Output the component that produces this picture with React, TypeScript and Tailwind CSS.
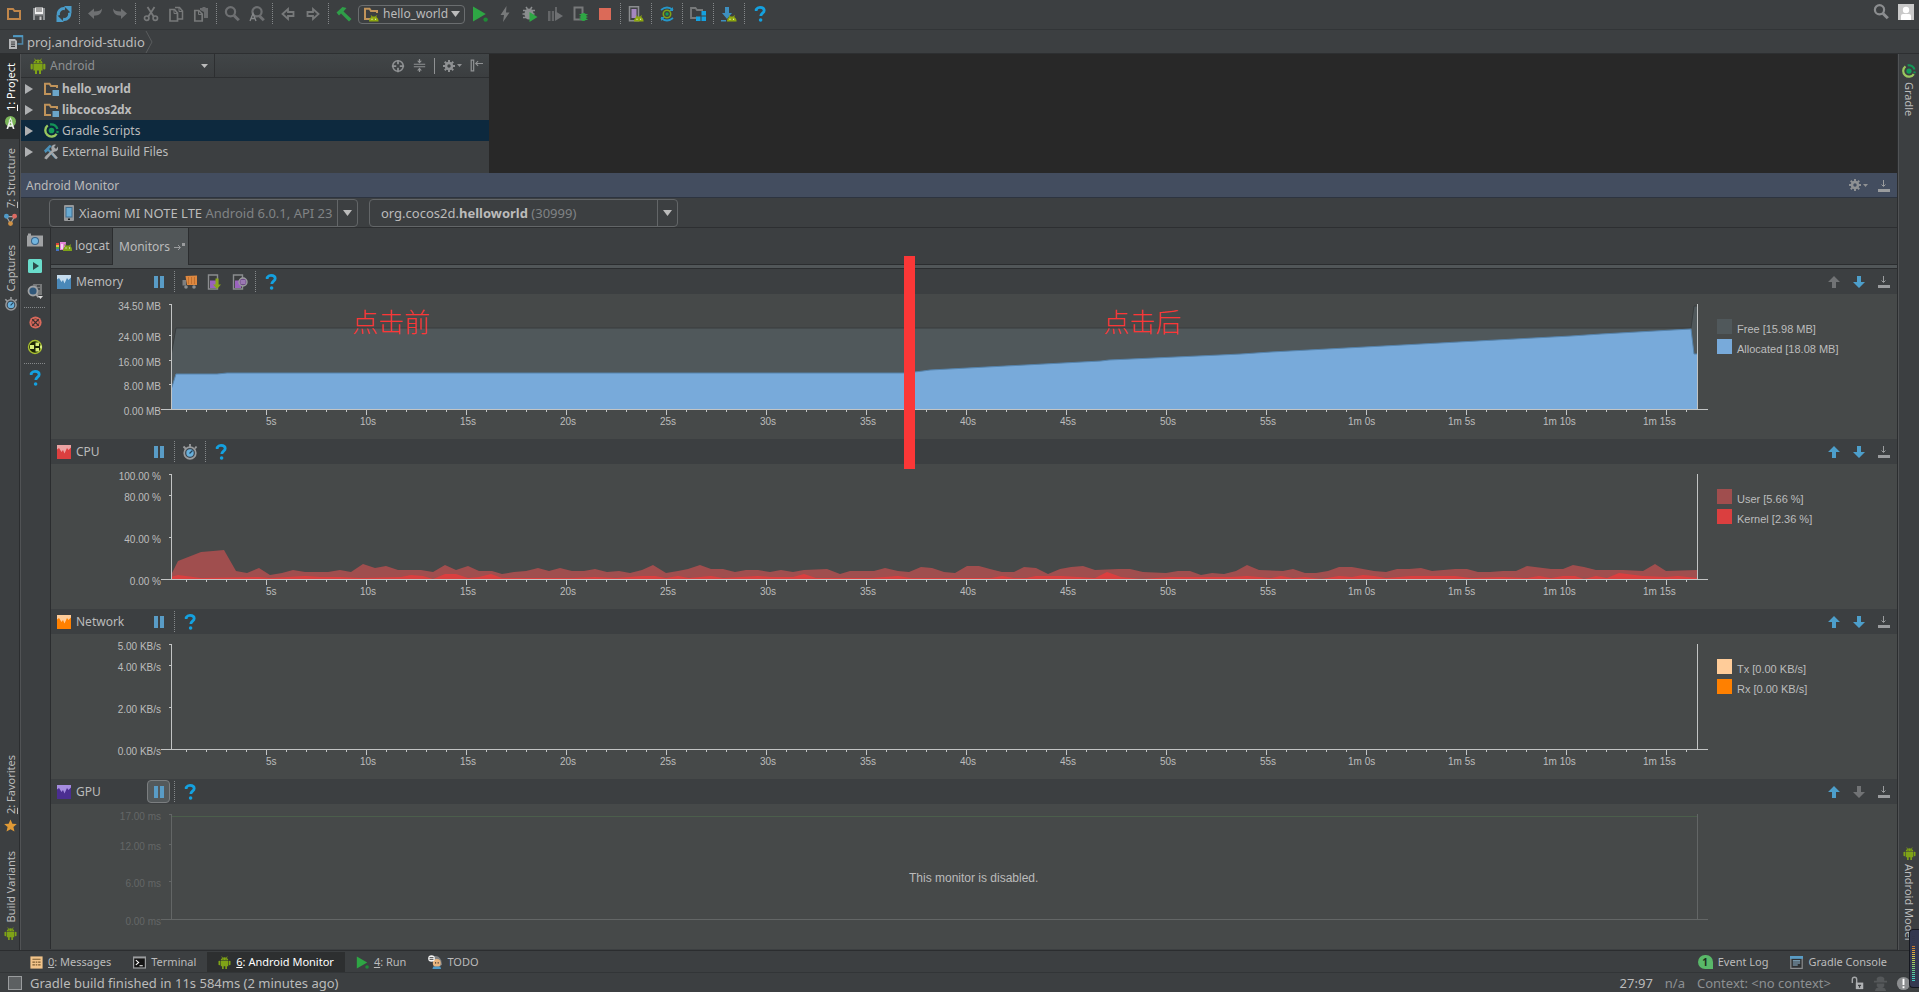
import type { ReactNode } from "react";

type Point = [number, number];

interface MonitorDef {
  name: string;
  light: string;
  dark: string;
  unit: string;
  ticks: { value: string; y: number }[];
  legend: { label: string; color: string }[];
  upEnabled: boolean;
  downEnabled: boolean;
  disabled?: boolean;
}

// Width of the plot's own coordinate system: 20 units are one second.
const PLOT_W = 1526;
const BASE_Y = 115;

const ALLOCATED: Point[] = [
  [0, 96], [5, 80], [46, 80], [56, 79], [735, 79], [752, 77], [759, 76], [930, 67], [938, 66],
  [1049, 61], [1070, 60], [1100, 58], [1250, 50], [1400, 42], [1430, 40], [1520, 35], [1523, 60], [1526, 60],
];
const HEAP: Point[] = [[0, 62], [5, 34], [1520, 34], [1523, 12], [1526, 12]];

const USER: Point[] = [
  [0, 111], [7, 97], [30, 88], [42, 87], [53, 86], [65, 107], [76, 109], [88, 104], [99, 111], [111, 109],
  [122, 106], [134, 108], [157, 108], [169, 106], [180, 108], [192, 100], [204, 104], [215, 102], [227, 106],
  [239, 106], [250, 106], [262, 108], [274, 101], [285, 106], [297, 102], [308, 107], [321, 107], [331, 110],
  [343, 108], [355, 107], [367, 104], [378, 107], [389, 104], [401, 107], [413, 107], [424, 105], [436, 108],
  [448, 107], [459, 109], [471, 106], [482, 101], [495, 109], [507, 107], [517, 105], [529, 101], [540, 105],
  [552, 105], [564, 108], [575, 106], [587, 106], [599, 108], [610, 106], [622, 108], [633, 106], [656, 105],
  [669, 110], [679, 107], [691, 107], [703, 107], [714, 104], [727, 107], [738, 108], [750, 103], [761, 104],
  [773, 108], [784, 109], [796, 102], [808, 102], [819, 105], [831, 108], [843, 108], [853, 103], [865, 104],
  [877, 110], [889, 105], [900, 103], [912, 102], [924, 106], [947, 105], [959, 105], [972, 108], [995, 109],
  [1007, 107], [1019, 107], [1030, 111], [1041, 109], [1053, 110], [1065, 107], [1076, 101], [1088, 106],
  [1112, 107], [1122, 105], [1134, 109], [1145, 109], [1157, 107], [1168, 103], [1181, 103], [1203, 107],
  [1215, 108], [1226, 105], [1238, 105], [1250, 104], [1261, 107], [1284, 105], [1296, 105], [1307, 108],
  [1319, 108], [1332, 107], [1345, 107], [1356, 102], [1380, 105], [1392, 105], [1402, 101], [1413, 103],
  [1425, 106], [1452, 106], [1472, 107], [1484, 100], [1495, 107], [1526, 106],
];
const KERNEL: Point[] = [
  [0, 113], [7, 111], [30, 114], [88, 113], [99, 114], [134, 112], [150, 113], [169, 113], [190, 114], [230, 113],
  [240, 111], [252, 112], [262, 115], [274, 110], [285, 110], [297, 114], [308, 113], [320, 110], [331, 114],
  [400, 114], [424, 113], [445, 114], [471, 112], [484, 112], [495, 114], [507, 112], [518, 114], [540, 112],
  [552, 114], [587, 112], [600, 113], [622, 113], [633, 110], [645, 114], [700, 114], [727, 112], [740, 114],
  [820, 114], [831, 112], [843, 114], [855, 114], [865, 112], [890, 112], [924, 114], [936, 108], [950, 113],
  [970, 115], [1000, 113], [1060, 113], [1076, 112], [1100, 114], [1110, 112], [1122, 114], [1134, 113],
  [1150, 115], [1168, 112], [1181, 113], [1192, 111], [1203, 112], [1215, 114], [1240, 112], [1284, 112],
  [1300, 114], [1332, 113], [1356, 114], [1368, 112], [1380, 114], [1392, 112], [1404, 112], [1413, 115],
  [1425, 112], [1436, 114], [1448, 109], [1472, 112], [1495, 113], [1507, 112], [1526, 114],
];

const MONITORS: MonitorDef[] = [
  {
    name: "Memory", light: "#c5dcee", dark: "#4a88b8", unit: "MB",
    ticks: [{ value: "34.50", y: 10 }, { value: "24.00", y: 41 }, { value: "16.00", y: 66 }, { value: "8.00", y: 90 }, { value: "0.00", y: 115 }],
    legend: [{ label: "Free [15.98 MB]", color: "#50585b" }, { label: "Allocated [18.08 MB]", color: "#78aada" }],
    upEnabled: false, downEnabled: true,
  },
  {
    name: "CPU", light: "#eba3a3", dark: "#db3f3f", unit: "%",
    ticks: [{ value: "100.00", y: 10 }, { value: "80.00", y: 31 }, { value: "40.00", y: 73 }, { value: "0.00", y: 115 }],
    legend: [{ label: "User [5.66 %]", color: "#a04e4e" }, { label: "Kernel [2.36 %]", color: "#db3f3f" }],
    upEnabled: true, downEnabled: true,
  },
  {
    name: "Network", light: "#ffcc99", dark: "#ff8000", unit: "KB/s",
    ticks: [{ value: "5.00", y: 10 }, { value: "4.00", y: 31 }, { value: "2.00", y: 73 }, { value: "0.00", y: 115 }],
    legend: [{ label: "Tx [0.00 KB/s]", color: "#ffcc99" }, { label: "Rx [0.00 KB/s]", color: "#ff8000" }],
    upEnabled: true, downEnabled: true,
  },
  {
    name: "GPU", light: "#a58ce0", dark: "#4b2e91", unit: "ms",
    ticks: [{ value: "17.00", y: 10 }, { value: "12.00", y: 40 }, { value: "6.00", y: 77 }, { value: "0.00", y: 115 }],
    legend: [],
    upEnabled: true, downEnabled: false, disabled: true,
  },
];

const toPath = (pts: Point[]) => pts.map(([x, y], i) => `${i ? "L" : "M"}${x} ${y}`).join(" ");
const toArea = (pts: Point[]) => `${toPath(pts)} L${PLOT_W} ${BASE_Y} L0 ${BASE_Y} Z`;
const pct = (x: number) => `${(x / PLOT_W) * 100}%`;

function Svg({ size = 16, children }: { size?: number; children: ReactNode }) {
  return (
    <svg width={size} height={size} viewBox="0 0 16 16" className="shrink-0" aria-hidden="true">
      {children}
    </svg>
  );
}

/* ---------- icons ---------- */

const droid = (
  <g fill="#7fa317">
    <path d="M4.2 .8 5.2 2.4C4.2 3 3.500 4 3.400 5.200h9.200c-.1-1.200-.8-2.200-1.800-2.800l1-1.600-.6-.4-1.100 1.600a5.500 5.500 0 0 0-4.200 0L4.800.4z" />
    <path d="M3.400 5.800h9.200v6.700H11V16H9V12.500H7V16H5V12.500H3.400z" />
    <rect x=".6" y="5.800" width="2.200" height="5.700" rx="1" />
    <rect x="13.200" y="5.800" width="2.200" height="5.700" rx="1" />
    <path d="M5.700 3.300h1.100v1.100H5.700zM9.300 3.300h1.100v1.100H9.300z" fill="#2f3a12" />
  </g>
);

const droidHead = (
  <g>
    <path d="M6 15.500C6 13 7.300 11.500 8.500 11L7.600 9.700l.7-.5 1.200 1.400h2.600l1.200-1.400.7.5-.9 1.300c1.200.5 2.500 2 2.500 4.500z" fill="#8ea80f" />
    <path d="M8.500 12.800h1v1h-1zM12.100 12.800h1v1h-1z" fill="#fff" />
  </g>
);

const AndroidIcon = ({ size = 16 }: { size?: number }) => <Svg size={size}>{droid}</Svg>;

const HelpIcon = () => (
  <Svg>
    <path d="M4.200 5V3.500Q5.500 1.400 8 1.400c2.700 0 4.200 1.200 4.200 3.100 0 2.600-3.400 2.800-3.400 5.600" fill="none" stroke="#14a1e0" strokeWidth="2.800" />
    <circle cx="8.600" cy="14" r="1.800" fill="#14a1e0" />
  </Svg>
);

const GradleIcon = ({ size = 15 }: { size?: number }) => (
  <Svg size={size}>
    <path d="M4 2.600A6.600 6.600 0 1 0 13.500 11.500" fill="none" stroke="#9ac85f" strokeWidth="2.500" />
    <path d="M6.500 1.600a6.600 6.600 0 0 1 7.800 4.800M14.600 8.500l-.5 2" fill="none" stroke="#149457" strokeWidth="2.500" />
    <circle cx="8" cy="8" r="3" fill="#149e5a" />
  </Svg>
);

const OpenIcon = () => (
  <Svg>
    <path d="M2 3h5l1.500 2H14v8H2z" fill="none" stroke="#c0864a" strokeWidth="2" />
  </Svg>
);

const SaveIcon = () => (
  <Svg>
    <path d="M2 2h12v12H2z" fill="#8f9294" />
    <path d="M4 1.500h8V8H4z" fill="#f2f2f2" />
    <path d="M5 3h6M5 5h6" stroke="#555" strokeWidth="1" />
    <path d="M4 9.500h8V14H4z" fill="#4c4f51" />
    <path d="M8.500 10.500h2V14h-2z" fill="#c5c5c5" />
  </Svg>
);

const SyncIcon = () => (
  <Svg>
    <path d="M2.500 9.500A5.500 5.500 0 0 1 9 2.700M13.500 6.500A5.500 5.500 0 0 1 7 13.300" fill="none" stroke="#4a9cc9" strokeWidth="3" />
    <path d="M8 0h7.500v7.500zM8 16H.5V8.500z" fill="#4a9cc9" />
  </Svg>
);

const UndoIcon = ({ flip = false }: { flip?: boolean }) => (
  <Svg>
    <path
      d="M1 7.500 7 2.500V5.500c4.500 0 7-1 8-3-.2 5-3 7.200-8 7.200V13z"
      fill="#6e7072"
      transform={flip ? "matrix(-1 0 0 1 16 0)" : undefined}
    />
  </Svg>
);

const CutIcon = () => (
  <Svg>
    <path d="M4.500 1 11 11M11.500 1 5 11" stroke="#77797a" strokeWidth="1.800" />
    <circle cx="3.700" cy="12.200" r="2.200" fill="none" stroke="#77797a" strokeWidth="1.700" />
    <circle cx="12.300" cy="12.200" r="2.200" fill="none" stroke="#77797a" strokeWidth="1.700" />
  </Svg>
);

const CopyIcon = () => (
  <Svg>
    <path d="M7 1.500h4.500L14.500 5v8H10" fill="none" stroke="#77797a" strokeWidth="1.500" />
    <path d="M2 3.500h4.500L9.500 7v8H2z" fill="none" stroke="#77797a" strokeWidth="1.700" />
    <path d="M6 4v3.500h3.500M11 2v3.500h3" fill="none" stroke="#77797a" />
  </Svg>
);

const PasteIcon = () => (
  <Svg>
    <path d="M7 2h2l1-1h2l1 1h2v10h-4V6L7 4z" fill="#6a6c6e" />
    <path d="M1.800 4.500h4L9.200 8v7H1.800z" fill="none" stroke="#77797a" strokeWidth="1.700" />
    <path d="M5.500 5v3.500H9" fill="none" stroke="#77797a" />
  </Svg>
);

const SearchIcon = ({ letter = false, color = "#6e7072" }: { letter?: boolean; color?: string }) => (
  <Svg>
    <circle cx={letter ? 8 : 6.500} cy="5.800" r="4.600" fill="none" stroke={color} strokeWidth="2.200" />
    <path d="m10 9.500 4.800 4.800" stroke={color} strokeWidth="3" />
    {letter && <path d="M1 15 4 7.500 7 15M2 12.500h4" fill="none" stroke="#858789" strokeWidth="1.300" />}
  </Svg>
);

const ArrowIcon = ({ flip = false }: { flip?: boolean }) => (
  <Svg>
    <path
      d="M2.500 8 8 3v3h5.500v4H8v3z"
      fill="none"
      stroke="#77797a"
      strokeWidth="1.800"
      transform={flip ? "matrix(-1 0 0 1 16 0)" : undefined}
    />
  </Svg>
);

const HammerIcon = () => (
  <Svg>
    <path d="M.5 6.500 6.500 1 10.500 2 7.500 5.500 15.500 13 13 15.500 5 7.500 3 9.500z" fill="#2f9e48" />
  </Svg>
);

const RunIcon = ({ size = 16 }: { size?: number }) => (
  <Svg size={size}>
    <path d="M1 .5 13.800 8 1 15.500z" fill="#2ea644" />
    <circle cx="13.600" cy="13.600" r="2.200" fill="#1f8a36" />
  </Svg>
);

const BoltIcon = () => (
  <Svg>
    <path d="M9.500 0 3.500 9h3.500L6 16l6.500-9.500H9z" fill="#77797a" />
  </Svg>
);

const BugIcon = () => (
  <Svg>
    <ellipse cx="7" cy="8" rx="4.500" ry="5.500" fill="#8b8d8f" />
    <path d="M1 4.500h12M.5 8h12M1 11.500h9M4 1l1.500 2M10 1 8.500 3" stroke="#8b8d8f" strokeWidth="1.500" />
    <path d="M7.500 6 15.500 11l-8 5z" fill="#2ea644" />
  </Svg>
);

const ProfileIcon = () => (
  <Svg>
    <path d="M1 5h2.500v10H1zM4.800 5H7v10H4.800zM8 1h2v5H8z" fill="#646668" />
    <path d="m8 5 8 5-8 5z" fill="#6e7072" />
  </Svg>
);

const AttachIcon = () => (
  <Svg>
    <path d="M2.500 1.500h8v12h-8z" fill="none" stroke="#77797a" strokeWidth="2" />
    <ellipse cx="11.500" cy="11" rx="3" ry="4" fill="#2ea644" />
    <path d="M7.500 8.500h8M7.500 11h8M7.500 13.500h8" stroke="#2ea644" />
  </Svg>
);

const StopIcon = () => (
  <Svg>
    <path d="M2 2h12v12H2z" fill="#db6a58" />
  </Svg>
);

const AvdIcon = () => (
  <Svg>
    <path d="M1.500.8h9v14h-9z" fill="#404244" stroke="#8b8d8f" strokeWidth="1.500" />
    <path d="M3.500 3h5v9h-5z" fill="#a587c0" />
    {droidHead}
  </Svg>
);

const SyncGradleIcon = () => (
  <Svg>
    <path d="M2 4Q8-1 14 4M2 12q6 5 12 0" fill="none" stroke="#2596c8" strokeWidth="1.700" />
    <path d="M14 1v4h-4zM2 15v-4h4z" fill="#2596c8" />
    <circle cx="8" cy="8" r="3.700" fill="none" stroke="#7fa317" strokeWidth="1.600" />
    <circle cx="8" cy="8" r="1.700" fill="#149e5a" />
  </Svg>
);

const StructureIcon = () => (
  <Svg>
    <path d="M13 4H7L5.500 2H1v10h5" fill="none" stroke="#77797a" strokeWidth="1.800" />
    <path d="M11.500 5H16v4.500h-4.500zM6 10.500h4.500V15H6zM11.500 10.500H16V15h-4.500z" fill="#14a1e0" />
  </Svg>
);

const SdkIcon = () => (
  <Svg>
    <path d="M4 1h4v6h3l-5 6-5-6h3zM0 14h5v1.500H0z" fill="#3e8fbf" />
    {droidHead}
  </Svg>
);

const FolderIcon = ({ badge = "square" }: { badge?: "square" | "droid" }) => (
  <Svg>
    <path d="M14 7V5H8L6.500 2.800H2V13h6" fill="none" stroke="#c0935a" strokeWidth="2" />
    {badge === "square" ? <path d="M9.500 9H16v6H9.500z" fill="#6ba5c9" /> : droidHead}
  </Svg>
);

const ToolsIcon = () => (
  <Svg>
    <path d="M1 6.500 6.500 1 9 2 6 5l8 8.500-1.800 1.500L5 7 2.500 9z" fill="#4a90b8" />
    <path d="M3 13.500 12 5" stroke="#a5a7a9" strokeWidth="2.600" />
    <path d="M15 2.500 13 5l-2-2 2-2.300a3.500 3.500 0 1 0 2 4.800zM1 14l4.500-3.500 1 1.500L3.500 15.500z" fill="#a5a7a9" />
    <path d="m9.500 9.500 4.500 5" stroke="#a5a7a9" strokeWidth="2.400" />
  </Svg>
);

const ModuleIcon = () => (
  <Svg>
    <path d="M5.500 2h9v8h-5" fill="none" stroke="#4f87a8" strokeWidth="1.600" />
    <path d="M5 1.200h10v2H5z" fill="#4f9ac4" />
    <path d="M1 5h6l2 2v8H1z" fill="#b5b7b9" />
    <path d="M3 8h4M3 10.200h4M3 12.400h4" stroke="#3c3f41" strokeWidth="1.200" />
  </Svg>
);

const TargetIcon = () => (
  <Svg size={14}>
    <circle cx="8" cy="8" r="6" fill="none" stroke="#8f9193" strokeWidth="1.800" />
    <path d="M8 1v5M8 10v5M1 8h5M10 8h5" stroke="#8f9193" strokeWidth="2" />
  </Svg>
);

const CollapseIcon = () => (
  <Svg size={13}>
    <path d="M1 6.500h14M1 9.500h14" stroke="#8f9193" strokeWidth="1.300" />
    <path d="M8 0v3M8 13v3" stroke="#8f9193" strokeWidth="1.500" />
    <path d="M5 2h6L8 5.500zM5 14h6l-3-3.500z" fill="#8f9193" />
  </Svg>
);

const GearIcon = () => (
  <span className="flex items-center gap-0.5">
    <Svg size={12}>
      <circle cx="8" cy="8" r="4" fill="none" stroke="#8f9193" strokeWidth="3.400" />
      <path d="M8 0v3M8 13v3M0 8h3M13 8h3M2.300 2.300l2.200 2.200M11.500 11.500l2.200 2.200M13.700 2.300l-2.200 2.200M4.500 11.500l-2.200 2.200" stroke="#8f9193" strokeWidth="2.600" />
    </Svg>
    <svg width="5" height="3" viewBox="0 0 5 3" aria-hidden="true"><path d="M0 0h5L2.500 3z" fill="#8f9193" /></svg>
  </span>
);

const HideLeftIcon = () => (
  <Svg size={13}>
    <path d="M1.500 1.500h3v13h-3z" fill="none" stroke="#8f9193" strokeWidth="1.500" />
    <path d="M6.500 5.500H16M10 2.500l-3 3 3 3" fill="none" stroke="#8f9193" strokeWidth="1.300" />
  </Svg>
);

const MinimizeIcon = () => (
  <svg width="12" height="13" viewBox="0 0 12 13" aria-hidden="true">
    <path d="M0 10h12v3H0z" fill="#9a9c9e" />
    <path d="M5.500 1v6M3.500 5.500l2 2 2-2" fill="none" stroke="#9a9c9e" />
  </svg>
);

const MoveIcon = ({ down = false, on = true }: { down?: boolean; on?: boolean }) => (
  <svg width="12" height="12" viewBox="0 0 12 12" aria-hidden="true">
    <path
      d="M6 0 12 6H8v6H4V6H0z"
      fill={on ? "#4d9fcb" : "#717375"}
      transform={down ? "matrix(1 0 0 -1 0 12)" : undefined}
    />
  </svg>
);

const PauseIcon = () => (
  <svg width="10" height="12" viewBox="0 0 10 12" aria-hidden="true">
    <path d="M0 0h4v12H0zM6 0h4v12H6z" fill="#599cc6" />
  </svg>
);

const GcIcon = () => (
  <Svg>
    <path d="M3.500 2 15 1.500V11H5z" fill="#de8840" />
    <path d="M6.500 3v7M9.500 3v7M12.500 3v7" stroke="#b86a2b" strokeWidth=".8" />
    <path d="M.5 6H4v5.500H.5z" fill="#7e7f80" />
    <circle cx="4" cy="13" r="1.800" fill="#8b8d8f" />
    <circle cx="12" cy="13" r="1.800" fill="#8b8d8f" />
  </Svg>
);

const HeapIcon = ({ alloc = false }: { alloc?: boolean }) => (
  <Svg>
    <path d="M1.500 1h9v14h-9z" fill="#3b3d3f" stroke="#8b8d8f" strokeWidth="1.400" />
    <path d="M3 6.500h6V14H3z" fill="#9a63bd" />
    {alloc ? (
      <>
        <circle cx="11" cy="8" r="4" fill="#6d4a85" stroke="#9a9c9e" strokeWidth="1.400" />
        <path d="M8.500 7h5M8.500 9h5" stroke="#c9a6e0" />
      </>
    ) : (
      <path d="M8.500 4.500h3v6h2.500l-4 4.500-4-4.500h2.500z" fill="#8ba61c" />
    )}
  </Svg>
);

const StopwatchIcon = ({ size = 16 }: { size?: number }) => (
  <Svg size={size}>
    <path d="M8 0v3M1.500 2.500 4 5M14.500 2.500 13 4.500" stroke="#999b9d" strokeWidth="1.800" />
    <circle cx="8" cy="9" r="5.800" fill="#3b4650" stroke="#999b9d" strokeWidth="1.700" />
    <circle cx="8" cy="9" r="3.700" fill="#69b0dc" />
    <path d="m7.500 9.500 3-3" stroke="#23445c" strokeWidth="1.300" />
  </Svg>
);

const MonitorBadge = ({ light, dark }: { light: string; dark: string }) => (
  <svg width="14" height="14" viewBox="0 0 14 14" aria-hidden="true">
    <path d="M0 0h14v14H0z" fill={light} />
    <path d="M0 4.500 2 3l2.500 4L6 5l1.500 3.500L10 3l1.500 2L14 2.500V14H0z" fill={dark} />
  </svg>
);

const CameraIcon = () => (
  <Svg>
    <path d="M0 3.500h4V1.500H1v2M0 3.500h16v11H0z" fill="#a0a2a4" />
    <circle cx="8" cy="9" r="4" fill="#37648a" />
    <circle cx="8" cy="9" r="3" fill="#72b5df" />
  </Svg>
);

const RecordIcon = () => (
  <Svg>
    <rect x="1" y="1" width="14" height="14" rx="1.500" fill="#6adccb" />
    <path d="m6 4 6 4-6 4z" fill="#2c4a4a" />
  </Svg>
);

const DumpIcon = () => (
  <Svg>
    <path d="M6 1h9v11H9z" fill="#77797a" />
    <path d="M10 3h3M10 6h3" stroke="#3c3f41" strokeWidth="1.500" />
    <circle cx="6" cy="8" r="4.500" fill="#31587a" stroke="#a0a2a4" strokeWidth="1.800" />
    <path d="m9 11 2.500 3.500" stroke="#a0a2a4" strokeWidth="2" />
    <path d="M11 13h5l-2.500 3z" fill="#ddd" />
  </Svg>
);

const TerminateIcon = () => (
  <Svg size={13}>
    <circle cx="8" cy="8" r="7.500" fill="#db6a5c" />
    <path d="m4 4 8 8M12 4l-8 8" stroke="#3a2f2f" strokeWidth="1.500" />
    <circle cx="8" cy="8" r="4.600" fill="none" stroke="#3a2f2f" strokeWidth=".8" />
  </Svg>
);

const LayoutIcon = () => (
  <Svg>
    <circle cx="8" cy="8" r="6.500" fill="#1c2407" stroke="#a8c030" strokeWidth="1.400" />
    <path d="M3 6h4v4H3zM8.500 3.500H12V7H8.500zM8.500 9H12v3.500H8.500zM13 6.500h2v3h-2z" fill="#d6ec7a" />
  </Svg>
);

const PhoneIcon = () => (
  <svg width="10" height="16" viewBox="0 0 10 16" aria-hidden="true">
    <rect width="10" height="16" rx="1" fill="#97999b" />
    <path d="M1.500 2h7v10.500h-7z" fill="#3f6f92" />
    <path d="M2.500 3h5v8.500h-5z" fill="#68aad2" />
    <path d="M4 13.500h2V15H4z" fill="#1c1c1c" />
  </svg>
);

const LogcatIcon = () => (
  <svg width="16" height="9" viewBox="0 0 16 9" className="shrink-0" aria-hidden="true">
    <path d="M0 1h3v2H0z" fill="#d9433b" />
    <path d="M0 3h3v2H0z" fill="#e2c33c" />
    <path d="M0 5h3v2H0z" fill="#4ba84b" />
    <path d="M0 7h3v2H0z" fill="#4672c4" />
    <path d="M4 0h6l-1 8H4z" fill="#e583d8" />
    <path d="M5 2h2v5H5z" fill="#f6d4f2" />
    <path d="M7 9c0-3 1-4 2-4.500L8 2l2 1.500h3L15 2l-.5 2.500C15.500 5 16 6 16 9z" fill="#7fa317" />
    <path d="M9.500 5.500h1v1h-1zM13 5.500h1v1h-1z" fill="#fff" />
  </svg>
);

const StudioIcon = () => (
  <Svg size={13}>
    <circle cx="8" cy="6.700" r="6.700" fill="#7cb65a" />
    <path d="M8 2v2" stroke="#e9efe5" strokeWidth="1.500" />
    <path d="M4 16 7.500 6M12 16 8.500 6M5.500 11.500q2.500 1.500 5 0" fill="none" stroke="#f0f0f0" strokeWidth="2" />
    <circle cx="8" cy="6" r="2.200" fill="#e9efe5" />
    <circle cx="8" cy="6" r=".9" fill="#4b7a35" />
  </Svg>
);

const NodesIcon = () => (
  <Svg size={13}>
    <path d="M3 4.500h10L8 13z" fill="none" stroke="#a0a2a4" strokeWidth="1.400" />
    <circle cx="3" cy="4" r="3" fill="#4f9ac8" />
    <circle cx="13" cy="4" r="3" fill="#db6a62" />
    <circle cx="8" cy="13" r="3" fill="#cf9145" />
  </Svg>
);

const StarIcon = () => (
  <Svg size={13}>
    <path d="m8 .5 2.300 5.200 5.500.5-4.200 3.700 1.300 5.600L8 12.500l-4.900 3 1.300-5.600L.2 6.200l5.500-.5z" fill="#e09a36" />
  </Svg>
);

const MessagesIcon = () => (
  <Svg size={13}>
    <path d="M.5.500h15v15H.5z" fill="#f2c48a" />
    <path d="M3 4h10M3 7.500h3M7 7.500h2M10 7.500h3M3 11h3M7 11h2M10 11h3" stroke="#7a5a30" strokeWidth="1.400" />
  </Svg>
);

const TerminalIcon = () => (
  <Svg size={13}>
    <path d="M0 .5h16v15H0z" fill="#9a9c9e" />
    <path d="M1.500 3h13v11h-13z" fill="#141414" />
    <path d="m3.500 5 3.500 3-3.500 3M8 12h4" fill="none" stroke="#fff" strokeWidth="1.300" />
  </Svg>
);

const TodoIcon = () => (
  <Svg size={14}>
    <path d="M4 2q8-3 11 4l1 5-3 2-6-2z" fill="#7f8183" />
    <circle cx="10" cy="9" r="4.500" fill="#e9b57e" />
    <path d="M6 13h8l1 3H5z" fill="#4f9ac8" />
    <circle cx="4" cy="4" r="3.800" fill="#f4f4f4" />
    <path d="M1.800 3h4.400M1.800 5h4.400" stroke="#333" />
    <path d="M8 9h1.300M11 9h1.300" stroke="#333" strokeWidth="1.300" />
  </Svg>
);

const ConsoleIcon = () => (
  <Svg size={13}>
    <path d="M1 1h14v14.300H1z" fill="#2f3133" stroke="#8b8d8f" strokeWidth="1.500" />
    <path d="M0 0h16v3.500H0z" fill="#5a9cc4" />
    <path d="M3.500 6h9M3.500 8.500h9M3.500 11h6" stroke="#8fb6cf" strokeWidth="1.300" />
  </Svg>
);

const LockIcon = () => (
  <Svg size={14}>
    <path d="M1.500 8V4Q1.500 1.500 4 1.500T6.500 4v4" fill="none" stroke="#a5a7a9" strokeWidth="1.600" />
    <path d="M5.500 7.500H14V15H5.500z" fill="#b0b2b4" />
    <path d="M8 10h3.500v1.500h-1v2H9v-2H8z" fill="#3c3f41" />
  </Svg>
);

const InspectorIcon = () => (
  <Svg size={15}>
    <path d="M4 2q4-3 8 0v3h3v2H1V5h3zM4 8h8v3q-4 4-8 0zM2 16q1-4 3-3.500h6q2-.5 3 3.500z" fill="#55585a" />
  </Svg>
);

/* ---------- shared bits ---------- */

function IconButton({ label, children }: { label: string; children: ReactNode }) {
  return (
    <button type="button" aria-label={label} className="flex h-6 w-[25px] shrink-0 items-center justify-center">
      {children}
    </button>
  );
}

function Sep() {
  return (
    <span className="flex w-1.5 shrink-0 justify-center">
      <span className="h-[22px] w-px bg-[repeating-linear-gradient(to_bottom,#85888a_0,#85888a_1px,transparent_1px,transparent_2px)]" />
    </span>
  );
}

function RowSep() {
  return (
    <span className="mb-0.5 mt-1 h-px w-[22px] bg-[repeating-linear-gradient(to_right,#85888a_0,#85888a_1px,transparent_1px,transparent_2px)]" />
  );
}

const Caret = () => (
  <svg width="9" height="6" viewBox="0 0 9 6" className="shrink-0" aria-hidden="true">
    <path d="M0 0h9L4.500 6z" fill="#bbbbbb" />
  </svg>
);

const HEADER_BG = "bg-linear-to-b from-[#414547] to-[#3b3e40]";

/* ---------- top ---------- */

function MainToolbar() {
  return (
    <header className="flex h-[30px] items-center border-b border-[#323537] pb-px pl-px">
      <IconButton label="Open"><OpenIcon /></IconButton>
      <IconButton label="Save All"><SaveIcon /></IconButton>
      <IconButton label="Synchronize"><SyncIcon /></IconButton>
      <Sep />
      <IconButton label="Undo"><UndoIcon /></IconButton>
      <IconButton label="Redo"><UndoIcon flip /></IconButton>
      <Sep />
      <IconButton label="Cut"><CutIcon /></IconButton>
      <IconButton label="Copy"><CopyIcon /></IconButton>
      <IconButton label="Paste"><PasteIcon /></IconButton>
      <Sep />
      <IconButton label="Find"><SearchIcon /></IconButton>
      <IconButton label="Replace"><SearchIcon letter /></IconButton>
      <Sep />
      <IconButton label="Back"><ArrowIcon /></IconButton>
      <IconButton label="Forward"><ArrowIcon flip /></IconButton>
      <Sep />
      <IconButton label="Make Project"><HammerIcon /></IconButton>
      <label className="mx-0.5 flex h-[19px] shrink-0 items-center rounded-sm border border-[#6b6e70] pl-1 pr-1">
        <FolderIcon badge="droid" />
        <select aria-label="Run configuration" className="w-[72px] appearance-none bg-transparent pl-1 text-xs leading-4 outline-none">
          <option>hello_world</option>
        </select>
        <Caret />
      </label>
      <IconButton label="Run"><RunIcon /></IconButton>
      <IconButton label="Apply Changes"><BoltIcon /></IconButton>
      <IconButton label="Debug"><BugIcon /></IconButton>
      <IconButton label="Profile"><ProfileIcon /></IconButton>
      <IconButton label="Attach debugger"><AttachIcon /></IconButton>
      <IconButton label="Stop"><StopIcon /></IconButton>
      <Sep />
      <IconButton label="AVD Manager"><AvdIcon /></IconButton>
      <Sep />
      <IconButton label="Sync Project with Gradle Files"><SyncGradleIcon /></IconButton>
      <Sep />
      <IconButton label="Project Structure"><StructureIcon /></IconButton>
      <Sep />
      <IconButton label="SDK Manager"><SdkIcon /></IconButton>
      <Sep />
      <IconButton label="Help"><HelpIcon /></IconButton>
      <div className="ml-auto flex items-center pb-1 pr-px">
        <IconButton label="Search Everywhere"><SearchIcon color="#8b8d8f" /></IconButton>
        <IconButton label="Account">
          <Svg>
            <path d="M0 0h16v16H0z" fill="#c9c9c9" />
            <circle cx="8" cy="6" r="3.200" fill="#fff" />
            <path d="M3 16v-4q0-2 2-2h6q2 0 2 2v4z" fill="#fff" />
          </Svg>
        </IconButton>
      </div>
    </header>
  );
}

function Breadcrumb() {
  return (
    <nav className="flex h-6 items-center border-b border-[#2d2f31] pl-2">
      <ModuleIcon />
      <a href="#project" className="pl-[3px] text-[13px] leading-5">proj.android-studio</a>
      <svg width="8" height="22" viewBox="0 0 8 22" aria-hidden="true">
        <path d="M1 0 7 11 1 22" fill="none" stroke="#5a5d5f" />
      </svg>
    </nav>
  );
}

/* ---------- tool window stripes ---------- */

function LeftTab({ hotkey, label, icon, active }: { hotkey?: string; label: string; icon: ReactNode; active?: boolean }) {
  return (
    <button
      type="button"
      className={`flex w-full flex-col items-center gap-[5px] pb-2.5 pl-0.5 pt-[9px] text-[11px] leading-4 ${active ? "bg-[#2d2f30] text-white" : ""}`}
    >
      <span className="rotate-180 [writing-mode:vertical-rl]">
        {hotkey && <><span className="underline">{hotkey}</span>: </>}
        {label}
      </span>
      {icon}
    </button>
  );
}

function LeftStripe() {
  return (
    <aside className="flex w-5 shrink-0 flex-col border-r border-[#2b2d2f]">
      <LeftTab hotkey="1" label="Project" icon={<StudioIcon />} active />
      <LeftTab hotkey="7" label="Structure" icon={<NodesIcon />} />
      <LeftTab label="Captures" icon={<StopwatchIcon size={14} />} />
      <div className="mt-auto">
        <LeftTab hotkey="2" label="Favorites" icon={<StarIcon />} />
        <LeftTab label="Build Variants" icon={<AndroidIcon size={13} />} />
      </div>
    </aside>
  );
}

function RightStripe() {
  return (
    <aside className="flex w-[21px] shrink-0 flex-col justify-between border-l border-[#515355] text-[11px] leading-4">
      <button type="button" className="flex flex-col items-center gap-1 pt-2.5">
        <GradleIcon size={14} />
        <span className="[writing-mode:vertical-rl]">Gradle</span>
      </button>
      <button type="button" className="flex flex-col items-center gap-1 pb-2.5">
        <AndroidIcon size={13} />
        <span className="[writing-mode:vertical-rl]">Android Model</span>
      </button>
    </aside>
  );
}

/* ---------- project tree ---------- */

const TREE = [
  { label: "hello_world", icon: <FolderIcon />, bold: true },
  { label: "libcocos2dx", icon: <FolderIcon />, bold: true },
  { label: "Gradle Scripts", icon: <GradleIcon />, selected: true },
  { label: "External Build Files", icon: <ToolsIcon /> },
];

function ProjectPanel() {
  return (
    <section className="w-[468px] shrink-0">
      <div className={`flex h-6 items-center border-b border-[#2d2f31] ${HEADER_BG}`}>
        <label className="flex h-full w-[194px] items-center border-r border-[#2d2f31] pl-[9px] pr-1.5">
          <AndroidIcon />
          <select aria-label="Project view" className="min-w-0 flex-1 appearance-none bg-transparent pl-1 text-xs leading-4 text-[#8d9092] outline-none">
            <option>Android</option>
          </select>
          <svg width="7" height="4" viewBox="0 0 7 4" aria-hidden="true"><path d="M0 0h7L3.500 4z" fill="#bbb" /></svg>
        </label>
        <div className="ml-auto flex items-center gap-2 pr-1.5">
          <button type="button" aria-label="Scroll from Source"><TargetIcon /></button>
          <button type="button" aria-label="Collapse All"><CollapseIcon /></button>
          <span className="h-4 w-px bg-[#8f9193]" />
          <button type="button" aria-label="Settings"><GearIcon /></button>
          <button type="button" aria-label="Hide"><HideLeftIcon /></button>
        </div>
      </div>
      <ul>
        {TREE.map((node) => (
          <li key={node.label} className={`flex h-[21px] items-center pl-1 ${node.selected ? "bg-[#0d293e]" : ""}`}>
            <svg width="8" height="10" viewBox="0 0 8 10" aria-hidden="true"><path d="M0 0 8 5 0 10z" fill="#aeb0b2" /></svg>
            <span className="flex w-[26px] justify-end">{node.icon}</span>
            <span className={`pl-[3px] text-xs leading-4 ${node.bold ? "font-bold" : ""}`}>{node.label}</span>
          </li>
        ))}
      </ul>
    </section>
  );
}

/* ---------- monitor tool window ---------- */

function DevicePicker({ label, value, children }: { label: string; value: string; children: ReactNode }) {
  return (
    <label className="relative flex h-7 w-[309px] items-center rounded-sm border border-[#636668] text-[13px] leading-4">
      <span aria-hidden="true" className="flex flex-1 items-center whitespace-pre">{children}</span>
      <span className="flex h-full w-5 items-center justify-center border-l border-[#636668]"><Caret /></span>
      <select aria-label={label} className="absolute inset-0 opacity-0">
        <option>{value}</option>
      </select>
    </label>
  );
}

function ActionColumn() {
  return (
    <div className="flex w-[30px] shrink-0 flex-col items-center border-r border-[#2b2d2f] pr-px">
      <IconButton label="Screen Capture"><CameraIcon /></IconButton>
      <span className="h-0.5" />
      <IconButton label="Screen Record"><RecordIcon /></IconButton>
      <span className="h-px" />
      <IconButton label="System Information"><DumpIcon /></IconButton>
      <RowSep />
      <IconButton label="Terminate Application"><TerminateIcon /></IconButton>
      <span className="h-px" />
      <IconButton label="Layout Inspector"><LayoutIcon /></IconButton>
      <RowSep />
      <IconButton label="Help"><HelpIcon /></IconButton>
    </div>
  );
}

function timeLabel(s: number) {
  return s < 60 ? `${s}s` : `${Math.floor(s / 60)}m ${s % 60}s`;
}

function Plot({ m }: { m: MonitorDef }) {
  const axis = m.disabled ? "#636666" : "#c2c4c4";
  // The first whole second lies 15 units right of the axis, and 5s at 95.
  const seconds = m.disabled ? [] : Array.from({ length: 76 }, (_, i) => i + 1);
  return (
    <svg height="145" className="block min-w-0 flex-1 overflow-visible" role="img" aria-label={`${m.name} chart`}>
      <svg width="100%" height="145" viewBox={`0 0 ${PLOT_W} 145`} preserveAspectRatio="none">
        {m.name === "Memory" && (
          <>
            <path d={toArea(HEAP)} fill="#50585b" />
            <path d={toArea(ALLOCATED)} fill="#78aada" />
            <path d={toPath(HEAP)} fill="none" stroke="#383d3f" vectorEffect="non-scaling-stroke" />
            <path d={toPath(ALLOCATED)} fill="none" stroke="#5684ad" vectorEffect="non-scaling-stroke" />
          </>
        )}
        {m.name === "CPU" && (
          <>
            <path d={toArea(USER)} fill="#a04e4e" />
            <path d={toArea(KERNEL)} fill="#db3f3f" />
          </>
        )}
        {m.name === "GPU" && <path d={`M0 12.500H${PLOT_W}`} stroke="#4b5e4b" vectorEffect="non-scaling-stroke" />}
      </svg>
      <g stroke={axis} shapeRendering="crispEdges">
        <line x1="0.500" x2="0.500" y1="10" y2="116" />
        <line x1="100%" x2="100%" y1="10" y2="116" />
        <line x1="-10" x2="0" y1="115.500" y2="115.500" />
        <line x1="0" x2="100%" y1="115.500" y2="115.500" />
        <svg x="100%" y="0" width="11" height="145">
          <line x1="0" x2="11" y1="115.500" y2="115.500" />
        </svg>
        {m.ticks.map((t) => (
          <line key={t.y} x1="-2" x2="0" y1={t.y + 0.5} y2={t.y + 0.5} />
        ))}
        {seconds.map((s) => {
          const x = pct(s * 20 - 4.5);
          return <line key={s} x1={x} x2={x} y1="116" y2={s % 5 ? 118 : 121} />;
        })}
      </g>
      {seconds.filter((s) => s % 5 === 0).map((s) => (
        <text key={s} x={pct(s * 20 - 5)} y="131" dx={s < 10 ? 0 : s < 60 ? -6 : s < 70 ? -18 : -23} fill="#bdbdbd" className="text-[10px]">
          {timeLabel(s)}
        </text>
      ))}
      {m.disabled && (
        <text x="52.600%" y="78" textAnchor="middle" fill="#bbbbbb" className="text-xs">This monitor is disabled.</text>
      )}
    </svg>
  );
}

function Monitor({ m }: { m: MonitorDef }) {
  return (
    <section>
      <div className="flex h-[25px] items-center bg-[#3c3f41] pl-1.5">
        <MonitorBadge light={m.light} dark={m.dark} />
        <h2 className="w-[76px] pl-[5px] text-xs leading-4">{m.name}</h2>
        <button
          type="button"
          aria-label={`Pause ${m.name}`}
          className={`flex h-[23px] w-[23px] items-center justify-center rounded-sm ${m.disabled ? "border border-[#7b7e80] bg-[#54595b]" : ""}`}
        >
          <PauseIcon />
        </button>
        <span className="w-px" />
        <Sep />
        {m.name === "Memory" && (
          <>
            <IconButton label="Initiate GC"><GcIcon /></IconButton>
            <IconButton label="Dump Java Heap"><HeapIcon /></IconButton>
            <IconButton label="Start Allocation Tracking"><HeapIcon alloc /></IconButton>
            <Sep />
          </>
        )}
        {m.name === "CPU" && (
          <>
            <IconButton label="Start Method Tracing"><StopwatchIcon /></IconButton>
            <Sep />
          </>
        )}
        <IconButton label={`${m.name} help`}><HelpIcon /></IconButton>
        <div className="ml-auto flex items-center pr-px">
          <IconButton label="Move up"><MoveIcon on={m.upEnabled} /></IconButton>
          <IconButton label="Move down"><MoveIcon down on={m.downEnabled} /></IconButton>
          <IconButton label="Minimize"><MinimizeIcon /></IconButton>
        </div>
      </div>
      <div className="flex h-[145px] bg-[#464949] font-['Liberation_Sans',Arial,sans-serif] text-[#bdbdbd]">
        <svg width="120" height="145" className={`shrink-0 text-[10px] ${m.disabled ? "fill-[#646767]" : "fill-[#bdbdbd]"}`} aria-label={`${m.name} scale`}>
          {m.ticks.map((t) => (
            <text key={t.y} x="110" y={t.y + 6} textAnchor="end">{`${t.value} ${m.unit}`}</text>
          ))}
        </svg>
        <Plot m={m} />
        <ul className="w-[200px] shrink-0 space-y-[5px] pl-5 pt-[25px] text-[11px] leading-[15px]">
          {m.legend.map((l) => (
            <li key={l.label} className="flex h-[15px] gap-[5px]">
              <span className="size-[15px]" style={{ backgroundColor: l.color }} />
              <span className="pt-[3px]">{l.label}</span>
            </li>
          ))}
        </ul>
      </div>
    </section>
  );
}

function MonitorWindow() {
  return (
    <section>
      <div className="flex h-[25px] items-center border-b border-[#2d3440] bg-[#434d5f] pl-[5px]">
        <h1 className="pt-px text-xs leading-4">Android Monitor</h1>
        <div className="ml-auto flex items-center gap-2.5 pr-[7px]">
          <button type="button" aria-label="Settings"><GearIcon /></button>
          <button type="button" aria-label="Hide"><MinimizeIcon /></button>
        </div>
      </div>
      <div className="flex h-[30px] items-center gap-[11px] border-b border-[#2d2f31] pl-7">
        <DevicePicker label="Device" value="Xiaomi MI NOTE LTE Android 6.0.1, API 23">
          <span className="flex w-[29px] justify-center pl-2"><PhoneIcon /></span>
          Xiaomi MI NOTE LTE<span className="text-[#808385]"> Android 6.0.1, API 23</span>
        </DevicePicker>
        <DevicePicker label="Process" value="org.cocos2d.helloworld (30999)">
          <span className="pl-[11px]">org.cocos2d.</span>
          <b>helloworld</b>
          <span className="text-[#808385]"> (30999)</span>
        </DevicePicker>
      </div>
      <div className="flex">
        <ActionColumn />
        <div className="relative min-w-0 flex-1">
          <div role="tablist" className="flex h-[37px] border-b border-[#2b2d2f] text-xs leading-4">
            <button type="button" role="tab" className="flex w-[62px] items-center gap-[3px] border-r border-[#2b2d2f] pl-[5px]">
              <LogcatIcon />
              logcat
            </button>
            <button type="button" role="tab" aria-selected="true" className="-mb-px flex w-[76px] items-center gap-1 border-r border-[#2b2d2f] bg-[#515658] pl-1.5">
              Monitors
              <svg width="11" height="9" viewBox="0 0 11 9" className="shrink-0" aria-hidden="true">
                <path d="M0 5.500h6M4 3l2.500 2.500L4 8" fill="none" stroke="#9a9c9e" />
                <path d="M8 1h3v3H8z" fill="#9a9c9e" />
              </svg>
            </button>
          </div>
          <div className="h-1 border-b border-[#2b2d2f] bg-[#515658]" />
          {MONITORS.map((m) => <Monitor key={m.name} m={m} />)}

          {/* hand-drawn marks on top of the charts */}
          <span className="absolute left-[46.200%] top-7 h-[213px] w-[11px] bg-[#fb3737]" />
          <span className="absolute left-[16.300%] top-[77px] font-['Noto_Sans_CJK_SC',sans-serif] text-[26px] font-light leading-8 text-[#fb3737]">点击前</span>
          <span className="absolute left-[57%] top-[77px] font-['Noto_Sans_CJK_SC',sans-serif] text-[26px] font-light leading-8 text-[#fb3737]">点击后</span>
        </div>
      </div>
    </section>
  );
}

/* ---------- bottom ---------- */

function BottomTab({ icon, hotkey, label, active }: { icon: ReactNode; hotkey?: string; label: string; active?: boolean }) {
  return (
    <button type="button" className={`flex h-full items-center gap-[5px] px-[11px] ${active ? "bg-[#2d2f30] text-white" : ""}`}>
      {icon}
      <span>
        {hotkey && <><span className="underline">{hotkey}</span>: </>}
        {label}
      </span>
    </button>
  );
}

function BottomBars() {
  return (
    <footer className="leading-4">
      <div className="flex h-[23px] items-center border-b border-t border-b-[#323537] border-t-[#2b2d2f] pl-[19px] pr-[21px] pt-px text-[11px]">
        <BottomTab icon={<MessagesIcon />} hotkey="0" label="Messages" />
        <BottomTab icon={<TerminalIcon />} label="Terminal" />
        <BottomTab icon={<AndroidIcon size={13} />} hotkey="6" label="Android Monitor" active />
        <BottomTab icon={<RunIcon size={13} />} hotkey="4" label="Run" />
        <BottomTab icon={<TodoIcon />} label="TODO" />
        <div className="ml-auto flex h-full">
          <BottomTab
            icon={
              <span className="flex h-[14px] w-[15px] items-center justify-center rounded-full rounded-br-none bg-[#59b869] text-[10px] font-bold leading-3 text-[#1d2b1f]">1</span>
            }
            label="Event Log"
          />
          <BottomTab icon={<ConsoleIcon />} label="Gradle Console" />
        </div>
      </div>
      <div className="flex h-[19px] items-center pl-2 pr-1 pt-px text-[13px]">
        <span className="size-[14px] border border-[#9a9c9e] bg-[#5d6062]" />
        <span className="pl-2">Gradle build finished in 11s 584ms (2 minutes ago)</span>
        <div className="ml-auto flex items-center gap-3">
          <span>27:97</span>
          <span className="text-[#8d9092]">n/a</span>
          <span className="w-[138px] text-[#8d9092]">Context: &lt;no context&gt;</span>
        </div>
        <div className="flex items-center gap-2 pl-4 pr-1">
          <LockIcon />
          <InspectorIcon />
          <Svg size={15}>
            <circle cx="8" cy="8" r="7" fill="#8b8d8f" />
            <path d="M8 3v6.500M8 11v2" stroke="#fff" strokeWidth="2" />
          </Svg>
        </div>
      </div>
    </footer>
  );
}

const LEVELS = [
  "#33364a", "#33364a", "#33364a", "#33364a", "#33364a", "#c87a30", "#d08a35", "#d89a3a", "#d8a83e", "#d8b542",
  "#d0c048", "#c8c84e", "#b8cc54", "#a8cc5c", "#98cc66", "#88cc70", "#78cc7c", "#6acc8a", "#5ecc98", "#54cca6",
  "#4cccb2", "#46ccbc", "#44ccc4",
];

export default function App() {
  return (
    <div className="relative flex min-h-screen flex-col overflow-hidden bg-[#3c3f41] font-['Noto_Sans','Noto_Sans_CJK_SC',sans-serif] text-[#bbbbbb]">
      <MainToolbar />
      <Breadcrumb />
      <div className="flex flex-1">
        <LeftStripe />
        <main className="min-w-0 flex-1 border-l border-r border-l-[#515355] border-r-[#2b2d2f]">
          <div className="flex h-[119px]">
            <ProjectPanel />
            <div className="flex-1 bg-[#282828]" />
          </div>
          <MonitorWindow />
        </main>
        <RightStripe />
      </div>
      <BottomBars />
      <div className="absolute bottom-1 right-0 flex w-2.5 flex-col gap-px rounded-l-sm border border-r-0 border-[#15171f] bg-[#343850] py-1.5 pl-0.5 pr-1" aria-hidden="true">
        {LEVELS.map((c, i) => (
          <span key={i} className="h-px" style={{ backgroundColor: c }} />
        ))}
      </div>
    </div>
  );
}
